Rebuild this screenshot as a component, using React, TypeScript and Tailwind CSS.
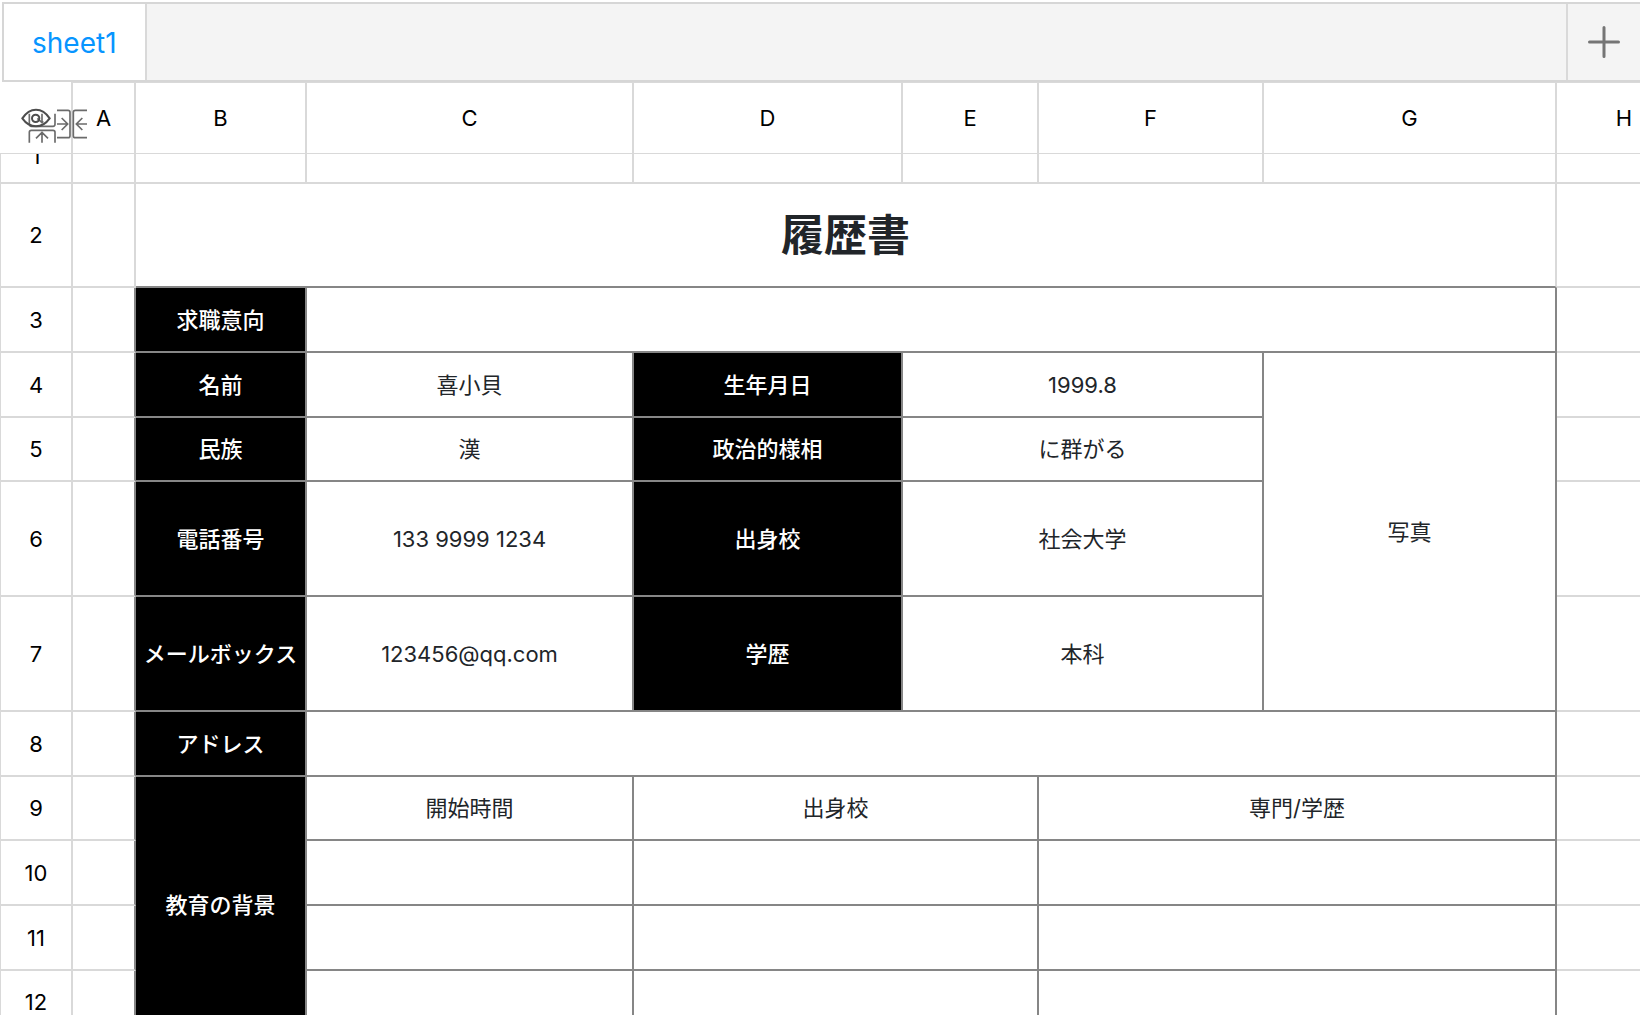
import type { ReactNode } from "react";

const LIGHT = "border-[#d9d9d9]";
const DARK = "border-[#868686]";

type CellProps = {
  children?: ReactNode;
  colSpan?: number;
  rowSpan?: number;
};

function RowHead({ n, height }: { n: number; height: string }) {
  return (
    <th scope="row" className={`border-l border-r-2 border-b-2 p-0 font-normal text-black ${LIGHT} ${height}`}>
      {n}
    </th>
  );
}

function Blank({ dark = false }: { dark?: boolean }) {
  return (
    <td
      className={`border-r-2 border-b-2 border-b-[#d9d9d9] p-0 ${dark ? "border-r-[#868686]" : "border-r-[#d9d9d9]"}`}
    />
  );
}

function Cell({ children, colSpan, rowSpan }: CellProps) {
  return (
    <td colSpan={colSpan} rowSpan={rowSpan} className={`border-r-2 border-b-2 p-0 text-center ${DARK}`}>
      {children}
    </td>
  );
}

function Label({ children, rowSpan }: CellProps) {
  return (
    <td
      rowSpan={rowSpan}
      className={`border-r-2 border-b-2 bg-black p-0 text-center font-medium whitespace-nowrap text-white ${DARK}`}
    >
      {children}
    </td>
  );
}

function FreezeTools() {
  const stroke = { fill: "none", stroke: "currentColor", strokeWidth: 5 };
  return (
    <div className="text-[#6b6b6b]">
      <button type="button" aria-label="Collapse rows above" className="absolute top-[31px] left-[28px]">
        <svg width="28" height="16" viewBox="84 70 84 48" {...stroke}>
          <path d="M88 72V104Q88 110 94 110H159Q165 110 165 104V72M126 72V98M112 86L126 99L130 95" />
        </svg>
      </button>
      <button type="button" aria-label="Collapse rows below" className="absolute top-[47px] left-[28px]">
        <svg width="28" height="14" viewBox="84 118 84 42" {...stroke}>
          <path d="M88 159V128Q88 122 94 122H159Q165 122 165 128V159M126 159V129M108 146L126 128L144 146" />
        </svg>
      </button>
      <button type="button" aria-label="Collapse columns left" className="absolute top-[27px] left-[57px]">
        <svg width="14" height="30" viewBox="171 58 42 90" {...stroke}>
          <path d="M171 62H204Q210 62 210 68V138Q210 144 204 144H171M171 103H203M185 85L203 103L185 121" />
        </svg>
      </button>
      <button type="button" aria-label="Collapse columns right" className="absolute top-[27px] left-[72px]">
        <svg width="15" height="30" viewBox="216 58 45 90" {...stroke}>
          <path d="M261 62H226Q220 62 220 68V138Q220 144 226 144H261M261 103H229M247 85L229 103L247 121" />
        </svg>
      </button>
      <button type="button" aria-label="Show hidden" className="absolute top-[26px] left-[21px] text-[#4d4d4d]">
        <svg width="30" height="20" viewBox="63 54 90 60" fill="none" stroke="currentColor" strokeWidth="6">
          <path d="M67 85Q84 59 108 59Q132 59 149 85Q132 109 108 109Q84 109 67 85Z" />
          <circle cx="107" cy="85" r="11" />
        </svg>
      </button>
    </div>
  );
}

const columns = ["A", "B", "C", "D", "E", "F", "G", "H"];

export default function App() {
  return (
    <div className="flex h-screen flex-col overflow-hidden bg-white font-['Inter','Noto_Sans_CJK_JP',sans-serif] text-[22px] leading-8 text-[#212529]">
      <div className="mt-0.5 ml-0.5 flex h-20 shrink-0 border-y-2 border-l-2 border-[#d6d6d6] bg-[#f4f4f4]">
        <div role="tablist" className="flex flex-1">
          <button
            type="button"
            role="tab"
            aria-selected="true"
            className="border-r-2 border-[#d9d9d9] bg-white px-7 pt-0.5 text-[28px] text-[#0795ff]"
          >
            sheet1
          </button>
        </div>
        <button
          type="button"
          aria-label="Add sheet"
          className="flex w-[74px] items-center justify-center border-l-2 border-[#d9d9d9] text-[#757575]"
        >
          <svg width="32" height="32" viewBox="0 0 32 32" stroke="currentColor" strokeWidth="3" strokeLinecap="round">
            <path d="M16 1.5V30.5M1.5 16H30.5" />
          </svg>
        </button>
      </div>

      <div className="min-h-0 flex-1 overflow-hidden">
        <table className="w-[1693px] table-fixed border-separate border-spacing-0">
          <colgroup>
            <col className="w-[73px]" />
            <col className="w-[63px]" />
            <col className="w-[171px]" />
            <col className="w-[327px]" />
            <col className="w-[269px]" />
            <col className="w-[136px]" />
            <col className="w-[225px]" />
            <col className="w-[293px]" />
            <col className="w-[136px]" />
          </colgroup>
          <thead>
            <tr>
              <td className={`relative h-[72px] border-r-2 border-b p-0 ${LIGHT}`}>
                <FreezeTools />
              </td>
              {columns.map((c) => (
                <th key={c} scope="col" className={`border-t border-r-2 border-b p-0 font-normal text-black ${LIGHT}`}>
                  {c}
                </th>
              ))}
            </tr>
          </thead>
          <tbody>
            <tr>
              <th scope="row" className={`h-[30px] border-l border-r-2 border-b-2 p-0 font-normal text-black ${LIGHT}`}>
                <div className="flex h-7 flex-col justify-end overflow-hidden">
                  <div className="flex h-[52px] shrink-0 items-center justify-center">1</div>
                </div>
              </th>
              {columns.map((c) => (
                <Blank key={c} />
              ))}
            </tr>
            <tr>
              <RowHead n={2} height="h-[104px]" />
              <Blank />
              <td
                colSpan={6}
                className="border-r-2 border-b-2 border-r-[#d9d9d9] border-b-[#868686] p-0 text-center text-[43px] font-bold"
              >
                履歴書
              </td>
              <Blank />
            </tr>
            <tr>
              <RowHead n={3} height="h-[65px]" />
              <Blank dark />
              <Label>求職意向</Label>
              <Cell colSpan={5} />
              <Blank />
            </tr>
            <tr>
              <RowHead n={4} height="h-[65px]" />
              <Blank dark />
              <Label>名前</Label>
              <Cell>喜小貝</Cell>
              <Label>生年月日</Label>
              <Cell colSpan={2}>1999.8</Cell>
              <Cell rowSpan={4}>写真</Cell>
              <Blank />
            </tr>
            <tr>
              <RowHead n={5} height="h-16" />
              <Blank dark />
              <Label>民族</Label>
              <Cell>漢</Cell>
              <Label>政治的様相</Label>
              <Cell colSpan={2}>に群がる</Cell>
              <Blank />
            </tr>
            <tr>
              <RowHead n={6} height="h-[115px]" />
              <Blank dark />
              <Label>電話番号</Label>
              <Cell>133 9999 1234</Cell>
              <Label>出身校</Label>
              <Cell colSpan={2}>社会大学</Cell>
              <Blank />
            </tr>
            <tr>
              <RowHead n={7} height="h-[115px]" />
              <Blank dark />
              <Label>メールボックス</Label>
              <Cell>123456@qq.com</Cell>
              <Label>学歴</Label>
              <Cell colSpan={2}>本科</Cell>
              <Blank />
            </tr>
            <tr>
              <RowHead n={8} height="h-[65px]" />
              <Blank dark />
              <Label>アドレス</Label>
              <Cell colSpan={5} />
              <Blank />
            </tr>
            <tr>
              <RowHead n={9} height="h-16" />
              <Blank dark />
              <Label rowSpan={4}>教育の背景</Label>
              <Cell>開始時間</Cell>
              <Cell colSpan={2}>出身校</Cell>
              <Cell colSpan={2}>専門/学歴</Cell>
              <Blank />
            </tr>
            <tr>
              <RowHead n={10} height="h-[65px]" />
              <Blank dark />
              <Cell />
              <Cell colSpan={2} />
              <Cell colSpan={2} />
              <Blank />
            </tr>
            <tr>
              <RowHead n={11} height="h-[65px]" />
              <Blank dark />
              <Cell />
              <Cell colSpan={2} />
              <Cell colSpan={2} />
              <Blank />
            </tr>
            <tr>
              <RowHead n={12} height="h-16" />
              <Blank dark />
              <Cell />
              <Cell colSpan={2} />
              <Cell colSpan={2} />
              <Blank />
            </tr>
          </tbody>
        </table>
      </div>
    </div>
  );
}
